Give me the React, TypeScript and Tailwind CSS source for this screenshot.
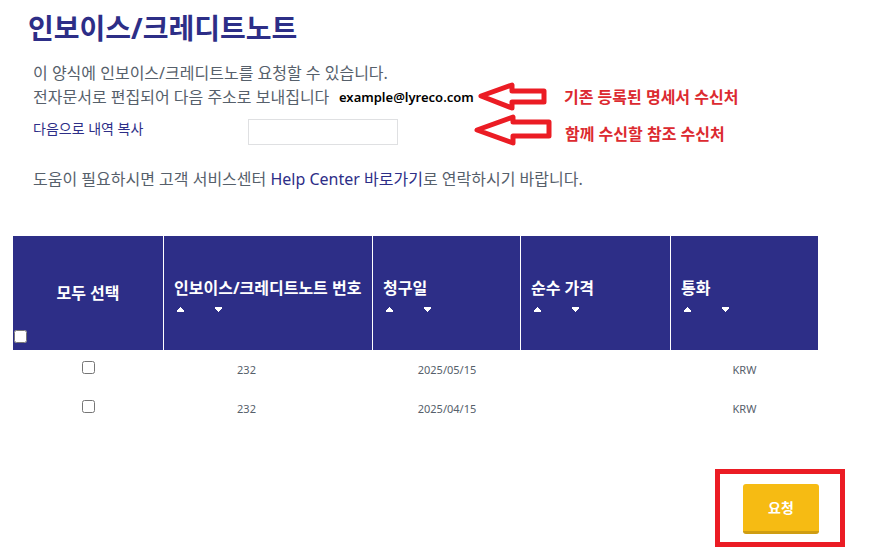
import { useState } from "react";

type Invoice = {
  id: number;
  number: string;
  date: string;
  netPrice: string;
  currency: string;
};

const invoices: Invoice[] = [
  { id: 1, number: "232", date: "2025/05/15", netPrice: "", currency: "KRW" },
  { id: 2, number: "232", date: "2025/04/15", netPrice: "", currency: "KRW" },
];

const sortableColumns = ["인보이스/크레디트노트 번호", "청구일", "순수 가격", "통화"];

function SortButtons({ label }: { label: string }) {
  return (
    <div className="flex gap-[31px] pl-[3px] pt-[7px]">
      <button type="button" aria-label={`${label} 오름차순`} className="block">
        <svg width="7" height="5" viewBox="0 0 7 5" fill="#fff" shapeRendering="crispEdges">
          <path d="M3 0h1v1h1v1h1v1h1v2H0V3h1V2h1V1h1z" />
        </svg>
      </button>
      <button type="button" aria-label={`${label} 내림차순`} className="block">
        <svg width="7" height="5" viewBox="0 0 7 5" fill="#fff" shapeRendering="crispEdges">
          <path d="M0 0h7v2H6v1H5v1H4v1H3V4H2V3H1V2H0z" />
        </svg>
      </button>
    </div>
  );
}

export default function App() {
  const [selected, setSelected] = useState<number[]>([]);
  const allSelected = selected.length === invoices.length;

  const toggle = (id: number) =>
    setSelected((now) => (now.includes(id) ? now.filter((n) => n !== id) : [...now, id]));

  return (
    <main className="flex flex-col bg-white font-['Noto_Sans','Noto_Sans_CJK_KR',sans-serif] text-[#56606b]">
      <h1 className="px-7 pt-2 text-[28px] leading-10 font-bold text-[#2d2e87]">
        인보이스/크레디트노트
      </h1>

      <section className="px-[33px] pt-[13px] text-base leading-6">
        <p>이 양식에 인보이스/크레디트노를 요청할 수 있습니다.</p>
        <div className="flex h-6 items-center">
          <p className="w-[306px] shrink-0 whitespace-nowrap">
            전자문서로 편집되어 다음 주소로 보내집니다
          </p>
          <strong className="w-[139px] shrink-0 text-[13px] font-semibold text-black">
            example@lyreco.com
          </strong>
          <svg className="shrink-0" width="70" height="30" viewBox="0 0 70 30" fill="none">
            <path d="M3 14L34 3V9H66V20H34V26Z" stroke="#eb1c24" strokeWidth="5" strokeLinejoin="round" />
          </svg>
          <span className="ml-4 whitespace-nowrap font-bold text-[#dc2a30]">
            기존 등록된 명세서 수신처
          </span>
        </div>
        <div className="flex h-[46px] items-center">
          <label htmlFor="copy-to" className="w-[215px] shrink-0 pb-1.5 text-sm text-[#2d2e87]">
            다음으로 내역 복사
          </label>
          <input
            id="copy-to"
            type="text"
            className="h-[26px] w-[150px] shrink-0 border border-[#dfe0e2] bg-white px-2 text-sm outline-none"
          />
          <svg className="mb-1 ml-[76px] shrink-0" width="79" height="32" viewBox="0 0 79 32" fill="none">
            <path d="M3 16L39 3V8H75V22H39V29Z" stroke="#eb1c24" strokeWidth="5" strokeLinejoin="round" />
          </svg>
          <span className="mt-1 ml-3 whitespace-nowrap font-bold text-[#dc2a30]">
            함께 수신할 참조 수신처
          </span>
        </div>
        <p className="pt-3">
          도움이 필요하시면 고객 서비스센터{" "}
          <a href="#help-center" className="text-[#2d2e87]">
            Help Center 바로가기
          </a>
          로 연락하시기 바랍니다.
        </p>
      </section>

      <div className="pt-[45px] pr-[67px] pl-[13px]">
        <table className="w-full table-fixed border-collapse">
          <colgroup>
            <col className="w-[151px]" />
            <col className="w-[209px]" />
            <col className="w-[148px]" />
            <col className="w-[150px]" />
            <col className="w-[147px]" />
          </colgroup>
          <thead>
            <tr className="bg-[#2d2e87] text-left text-base leading-6 font-bold text-white">
              <th className="p-0">
                <div className="flex h-[114px] flex-col border-r border-white">
                  <label htmlFor="select-all" className="pt-[45px] text-center">
                    모두 선택
                  </label>
                  <input
                    id="select-all"
                    type="checkbox"
                    className="mt-auto mb-[7px] ml-px size-[13px]"
                    checked={allSelected}
                    onChange={() => setSelected(allSelected ? [] : invoices.map((i) => i.id))}
                  />
                </div>
              </th>
              {sortableColumns.map((label) => (
                <th key={label} className="group p-0">
                  <div className="flex h-[114px] flex-col border-r border-white pt-[40px] pl-[10px] whitespace-nowrap group-last:border-r-0">
                    {label}
                    <SortButtons label={label} />
                  </div>
                </th>
              ))}
            </tr>
          </thead>
          <tbody>
            {invoices.map((invoice) => (
              <tr key={invoice.id} className="h-[39px] text-center text-[11px] leading-4">
                <td className="p-0">
                  <input
                    type="checkbox"
                    aria-label={`${invoice.date} 선택`}
                    className="mx-auto mb-1 block size-[13px]"
                    checked={selected.includes(invoice.id)}
                    onChange={() => toggle(invoice.id)}
                  />
                </td>
                <td className="pr-11">{invoice.number}</td>
                <td>{invoice.date}</td>
                <td>{invoice.netPrice}</td>
                <td>{invoice.currency}</td>
              </tr>
            ))}
          </tbody>
        </table>
      </div>

      <div className="mt-[41px] mr-10 self-end border-5 border-[#eb1c24] pt-[10px] pr-[21px] pb-2 pl-[23px]">
        <button
          type="button"
          className="block h-[50px] w-[76px] rounded-[3px] border-b-3 border-[#cf9d12] bg-[#f6bb13] text-sm font-bold text-white"
        >
          요청
        </button>
      </div>
    </main>
  );
}
